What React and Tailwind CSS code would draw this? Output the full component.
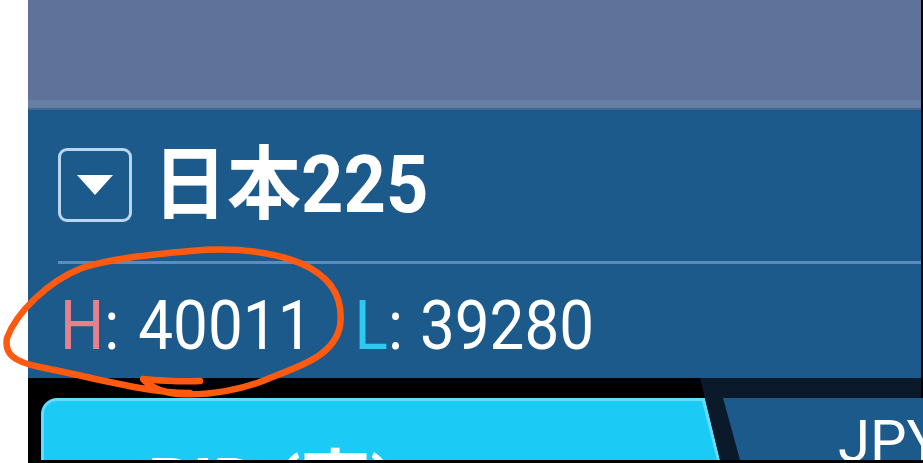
const App = () => {
    return (
        <div className="relative w-[923px] h-[463px] flex bg-white overflow-hidden" style={{ fontFamily: 'Roboto, "Noto Sans CJK JP", sans-serif' }}>
            <div className="w-[28px] shrink-0 bg-white" />

            <div className="w-[893px] flex flex-col">
                {/* header band */}
                <div className="h-[100px] bg-[#5f7299]" />
                <div className="h-[8px] bg-[#6680a5]" />
                <div className="h-[2px] bg-[#46668f]" />

                {/* instrument panel */}
                <div className="h-[268px] bg-[#1b5a8a] flex flex-col pt-[38px]">
                    <div className="h-[74px] flex items-center pl-[30px]">
                        <div className="w-[74px] h-[74px] border-[3px] border-[#b9d6f0] rounded-[9px] flex items-center justify-center">
                            <svg width="36" height="20" viewBox="0 0 36 20">
                                <polygon points="0,0 36,0 18,20" fill="#ffffff" />
                            </svg>
                        </div>
                        <span className="ml-[21px] text-[74px] leading-[74px] font-bold text-white scale-y-108">日本225</span>
                    </div>

                    <div className="mt-[39px] ml-[30px] h-[3px] bg-[#5a8dbd]" />

                    <div className="mt-[31px] h-[60px] pl-[32px] flex items-center text-[62px] leading-[60px] text-white scale-y-112">
                        <span className="text-[#e8808c]">H</span>
                        <span>:</span>
                        <span className="ml-[19px]">40011</span>
                        <span className="ml-[42px] text-[#2ec8f0]">L</span>
                        <span>:</span>
                        <span className="ml-[17px]">39280</span>
                    </div>
                </div>

                {/* order buttons */}
                <div className="h-[82px] flex bg-[#0a1a2a]">
                    <div className="w-[692px] bg-black pt-[20px] pl-[13px] [clip-path:polygon(0_0,672px_0,692px_100%,0_100%)]">
                        <div className="w-[679px] h-[62px] rounded-tl-[16px] bg-[#63ddff] pt-[3px] pl-[3px] [clip-path:polygon(0_0,664px_0,679px_100%,0_100%)]">
                            <div className="h-full w-full rounded-tl-[13px] bg-[#1ccbf5] pl-[104px] pt-[48px] overflow-hidden [clip-path:polygon(0_0,658px_0,673px_100%,0_100%)]">
                                <span className="block text-[70px] leading-[70px] font-bold text-white whitespace-nowrap">BID (売)</span>
                            </div>
                        </div>
                    </div>
                    <div className="flex-1 pt-[20px] pl-[3px]">
                        <div className="h-full bg-[#1b5a8a] overflow-hidden pl-[115px] pt-[14px] [clip-path:polygon(0_0,100%_0,100%_100%,17px_100%)]">
                            <span className="block text-[58px] leading-[58px] text-white whitespace-nowrap">JPY</span>
                        </div>
                    </div>
                </div>
                <div className="h-[3px] bg-black" />
            </div>

            <div className="w-[2px] shrink-0 bg-black" />

            {/* hand-drawn marker circle */}
            <svg className="absolute left-0 top-0 pointer-events-none" width="923" height="463" viewBox="0 0 923 463">
                <path
                    d="M 200 381 C 180 382, 152 380, 143 379 C 150 387, 160 392, 178 394 C 210 396, 245 389, 270 378 C 300 366, 334 356, 340 326 C 344 296, 330 276, 300 263 C 270 251, 235 247, 190 251 C 150 255, 112 258, 82 268 C 48 281, 16 313, 7 338 C 4 354, 14 362, 40 367 C 80 375, 110 383, 140 388 C 156 391, 172 393, 190 393"
                    fill="none"
                    stroke="#ff5a0f"
                    strokeWidth="6.5"
                    strokeLinecap="round"
                    strokeLinejoin="round"
                />
            </svg>
        </div>
    );
};

export default App;
